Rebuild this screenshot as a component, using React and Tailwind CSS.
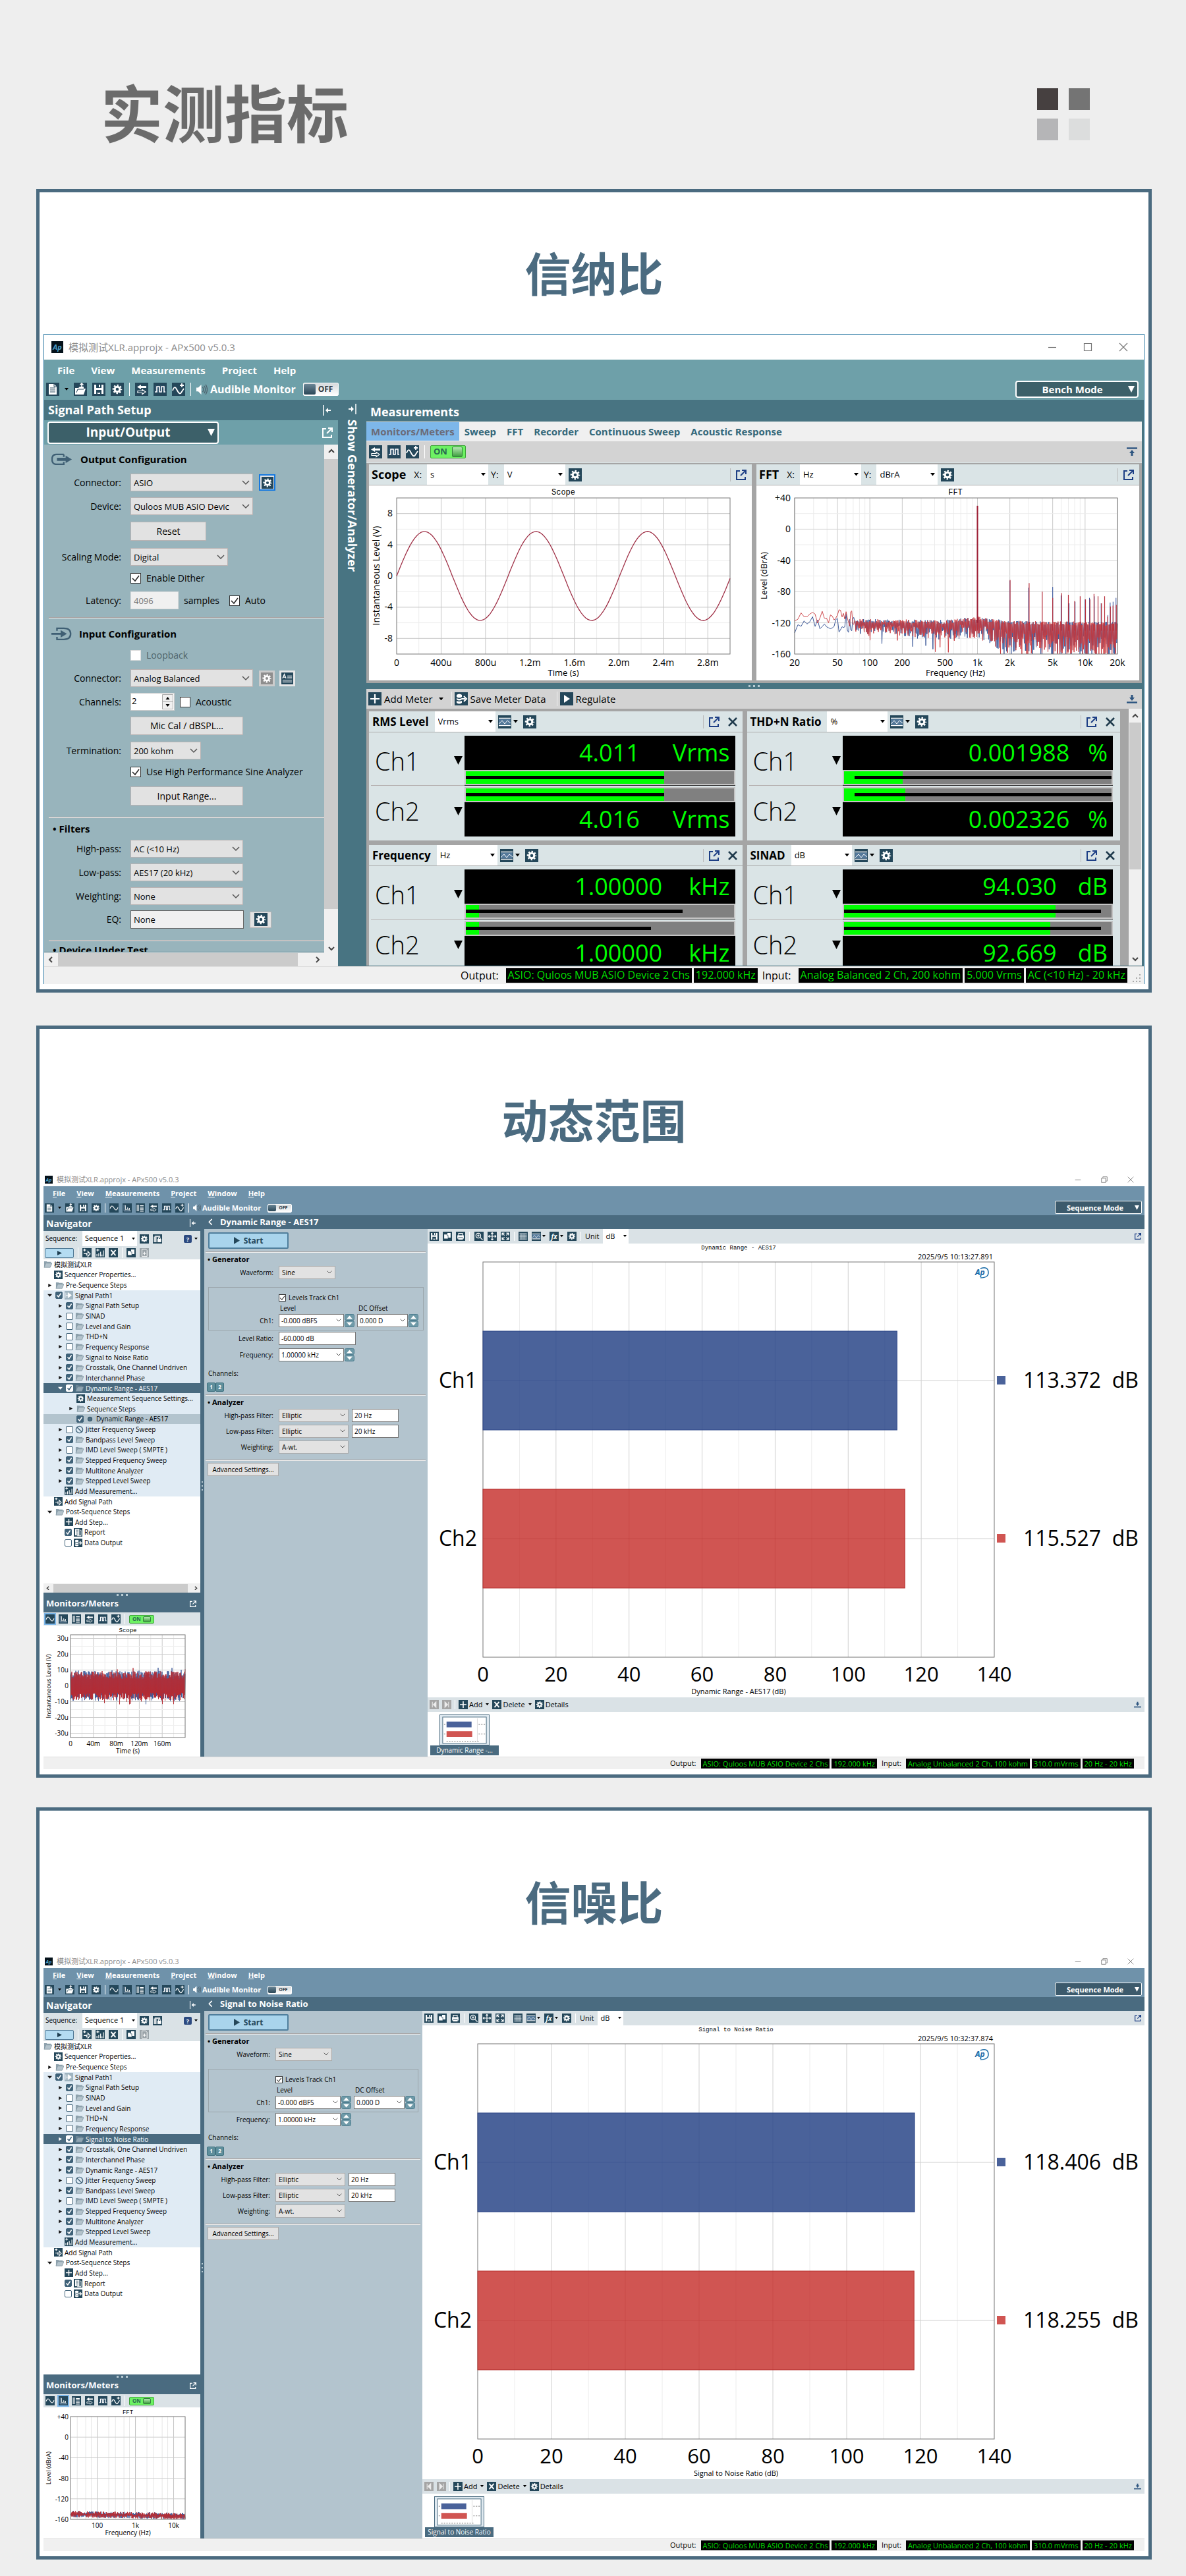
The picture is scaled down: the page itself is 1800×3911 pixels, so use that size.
const NAV_TOP = [
  { text: '模拟测试XLR', icon: 'folder', pad: 'pl-0', kind: 'root' },
  { text: 'Sequencer Properties...', icon: 'gear', pad: 'pl-4' },
  { text: 'Pre-Sequence Steps', icon: 'folder', pad: 'pl-1', arrow: 'right' },
];

const NAV_BOTTOM = [
  { text: 'Add Signal Path', icon: 'addPath', pad: 'pl-4' },
  { text: 'Post-Sequence Steps', icon: 'folder', pad: 'pl-1', arrow: 'down' },
  { text: 'Add Step...', icon: 'plus', pad: 'pl-8' },
  { text: 'Report', icon: 'report', pad: 'pl-8', check: true },
  { text: 'Data Output', icon: 'data', pad: 'pl-8', check: false },
];

const m = (text, check, extra = {}) => ({ text, check, icon: 'folder', pad: 'pl-5', arrow: 'right', tint: true, ...extra });

const navItems = (selected) => [
  ...NAV_TOP,
  m('Signal Path1', true, { icon: 'path', pad: 'pl-1', arrow: 'down' }),
  m('Signal Path Setup', true),
  m('SINAD', false),
  m('Level and Gain', false),
  m('THD+N', false),
  m('Frequency Response', false),
  m('Signal to Noise Ratio', true, { selected: selected === 'snr' }),
  m('Crosstalk, One Channel Undriven', true),
  m('Interchannel Phase', true),
  m('Dynamic Range - AES17', true, { selected: selected === 'dr', arrow: selected === 'dr' ? 'down' : 'right' }),
  ...(selected === 'dr'
    ? [
        { text: 'Measurement Sequence Settings...', icon: 'gear', pad: 'pl-[50px]', tint: true },
        { text: 'Sequence Steps', icon: 'folder', pad: 'pl-9', arrow: 'right', tint: true },
        { text: 'Dynamic Range - AES17', icon: 'dot', pad: 'pl-[50px]', check: true, leaf: true },
      ]
    : []),
  m('Jitter Frequency Sweep', false, { icon: 'ban' }),
  m('Bandpass Level Sweep', true),
  m('IMD Level Sweep ( SMPTE )', false),
  m('Stepped Frequency Sweep', true),
  m('Multitone Analyzer', true),
  m('Stepped Level Sweep', true),
  { text: 'Add Measurement...', icon: 'addBars', pad: 'pl-8', tint: true },
  ...NAV_BOTTOM,
];

// glyphs are drawn white on a 20x20 dark tile
const GLYPHS = {
  doc: <><path d="M4 2h8l4 4v12H4z" fill="#fff" /><path d="M12 2v4h4M6 8h8M6 11h8M6 14h8" stroke="#24475a" fill="none" /></>,
  open: <><path d="M2 8h5l2-2h6v3h3l-3 9H2z" fill="#fff" /><path d="M12 1v6M9.500 3.500 12 1l2.500 2.500" stroke="#fff" strokeWidth="1.600" fill="none" /><path d="M4 15l2-5h9" stroke="#24475a" fill="none" /></>,
  save: <path fillRule="evenodd" fill="#fff" d="M3 3h14v14H3zM6 3v5h8V3h-2v4H10V3zM6 11v6h2v-2h1.500v1h1v-1H12v2h2v-6z" />,
  gear: <g fill="none" stroke="#fff"><circle cx="10" cy="10" r="3.800" strokeWidth="3" /><circle cx="10" cy="10" r="6" strokeWidth="2.600" strokeDasharray="2.356 2.356" strokeDashoffset="1.178" /></g>,
  route: <><path d="M9 3v2h8v3H9v2L3 6.500z" fill="#fff" /><path d="M11 10.500v2H4v3h7v2l5-3.500z" fill="none" stroke="#fff" strokeWidth="1.200" /></>,
  pulse: <><path d="M3 4v12M7 4v12M11 4v12M15 4v12M2 8h16M2 12h16" stroke="#45668a" strokeWidth=".6" /><path d="M2 14h3V6h4v8h3V6h4v8h2" fill="none" stroke="#fff" strokeWidth="1.600" /></>,
  wavePlus: <path d="M1 12c2-6 4-6 6-2s5 9 7 5l4-6M15 1v6M12 4h6" fill="none" stroke="#fff" strokeWidth="1.800" />,
  sine: <path d="M1.500 11C4 4 7 4 10 10s6 6 8.500-1" fill="none" stroke="#fff" strokeWidth="1.500" />,
  spectrum: <><path d="M3 3v14h15" stroke="#8fa8c8" fill="none" /><path d="M5 15l1-1V4l1 11 2-2 1 2 1-6 1 6 2-1 1-4v5h2" stroke="#fff" fill="none" /></>,
  list: <path d="M3 3v14M6 3v14M9 5h8M9 8h8M9 11h8M9 14h8M9 17h8" stroke="#fff" strokeWidth="1.500" />,
  plus: <path d="M10 3v14M3 10h14" stroke="#fff" strokeWidth="2.200" />,
  cross: <path d="M5 4l10 12M15 4L5 16" stroke="#fff" strokeWidth="2.600" />,
  play: <path d="M6 4l9 6-9 6z" fill="#fff" />,
  first: <path d="M6 4v12M14 4v12L8 10z" stroke="#eee" fill="#eee" strokeWidth="1.500" />,
  last: <path d="M14 4v12M6 4v12l6-6z" stroke="#eee" fill="#eee" strokeWidth="1.500" />,
  data: <><path d="M3 4q4-3 8 0v3q-4 3-8 0zM3 9q4 2 8 0v2q-4 3-8 0zM3 13q4 2 8 0v3q-4 3-8 0z" fill="#fff" /><path d="M11 10h5M14 6l4 4-4 4" stroke="#fff" strokeWidth="2" fill="none" /></>,
  trace: <><path d="M1 4.500h18M1 15.500h18" stroke="#fff" strokeWidth="1.500" /><rect x="1" y="5.500" width="18" height="9" fill="#54799a" /><path d="M1 13l5-5 4 5 4-5 5 4" stroke="#fff" fill="none" /></>,
  copy: <path d="M3 6h6v3h2v6H3zM10 3h7v10h-5V8h-2z" fill="#fff" />,
  addDoc: <><path d="M5 2h8l3 3v13H5z" fill="none" stroke="#fff" strokeWidth="1.400" /><path d="M10.500 8v7M7 11.500h7" stroke="#fff" strokeWidth="1.600" /></>,
  lock: <><path d="M2 5h6v12H2zM4 3h12v3H4z" fill="#fff" opacity=".8" /><path d="M10 10h8v7h-8z" fill="#fff" /><path d="M12 10V8q2-3 4 0v2" stroke="#fff" strokeWidth="1.500" fill="none" /></>,
  print: <path fillRule="evenodd" fill="#fff" d="M5 3h10v5h2v7h-2v2H5v-2H3V8h2zM6.500 4.500V8h7V4.500zM5 12v1.500h10V12z" />,
  zoom: <g fill="none" stroke="#fff" strokeWidth="1.700"><circle cx="8.500" cy="8.500" r="5.200" /><path d="M12.500 12.500 18 18M6 8.500h5M8.500 6v5" /></g>,
  move: <path d="M10 2v16M2 10h16M7.500 4.500 10 2l2.500 2.500M7.500 15.500 10 18l2.500-2.500M4.500 7.500 2 10l2.500 2.500M15.500 7.500 18 10l-2.500 2.500" stroke="#fff" strokeWidth="1.700" fill="none" />,
  expand: <path d="M3 8V3h5M12 3h5v5M17 12v5h-5M8 17H3v-5M3 3l5 5M17 3l-5 5M17 17l-5-5M3 17l5-5" stroke="#fff" strokeWidth="1.900" fill="none" />,
  table: <path d="M2 4h16M2 7.500h16M2 11h16M2 14h16M2 17h16M4 4v13M7 4v13M10 4v13M13 4v13M16 4v13" stroke="#dfe8ee" strokeWidth="1" />,
  func: <text x="10" y="15" textAnchor="middle" fill="#fff" fontSize="14" fontStyle="italic" fontWeight="700">fx</text>,
  report: <><path d="M3 2h10v15H3z" fill="#fff" /><path d="M5 5h6M5 8h6M5 11h6M5 14h6" stroke="#24475a" /><path d="M15 5h2v13H8" stroke="#fff" strokeWidth="1.500" fill="none" /></>,
  addPath: <path d="M5 1v6M2 4h6M3 12h5M12 7v11l5-5.500zM9 10v6" stroke="#fff" strokeWidth="1.700" fill="none" />,
  addBars: <path d="M5 1v6M2 4h6M3 18v-5M7 18v-7M11 18V8M14 18v-4M17 18V5" stroke="#fff" strokeWidth="1.700" fill="none" />,
  card: <><path d="M10 6h8M10 9h8M2 13h16M2 16h16" stroke="#fff" strokeWidth="1.200" /><path d="M2 10l3-7 3 7M3 8h4" stroke="#fff" fill="none" strokeWidth="1.400" /></>,
  path: <path d="M3 4v12M3 10h5M8 4v12l8-6z" fill="#fff" stroke="#fff" strokeWidth="1.300" />,
};

function Tile({ name, size = 'size-5', color = '#24475a' }) {
  return (
    <svg viewBox="0 0 20 20" className={`${size} shrink-0`} aria-hidden="true">
      <rect width="20" height="20" fill={color} />
      {GLYPHS[name]}
    </svg>
  );
}

function ToolButton({ name, size, color, label }) {
  return (
    <button type="button" aria-label={label || name} className="flex shrink-0">
      <Tile name={name} size={size} color={color} />
    </button>
  );
}

function Down({ tall, className = 'w-2 text-black' }) {
  return (
    <svg viewBox={tall ? '0 0 8 8' : '0 0 8 5'} className={`${className} shrink-0`} aria-hidden="true">
      <path d={tall ? 'M0 0h8L4 8z' : 'M0 0h8L4 5z'} fill="currentColor" />
    </svg>
  );
}

function Chevron({ className = 'w-3' }) {
  return (
    <svg viewBox="0 0 12 8" className={`${className} pointer-events-none shrink-0`} aria-hidden="true">
      <path d="M1 1l5 5 5-5" fill="none" stroke="#555" strokeWidth="1.500" />
    </svg>
  );
}

function PopOut({ className = 'size-4 text-[#1d3f85]' }) {
  return (
    <svg viewBox="0 0 16 16" className={`${className} shrink-0`} fill="none" stroke="currentColor" strokeWidth="2" aria-hidden="true">
      <path d="M6 2H1v13h13v-4M9 1h6v6M15 1L7 9" />
    </svg>
  );
}

function Collapse({ flip, className = 'h-4' }) {
  return (
    <svg viewBox="0 0 14 16" className={`${className} shrink-0 ${flip ? 'rotate-180' : ''}`} aria-hidden="true">
      <path d="M2 0v16" stroke="#fff" strokeWidth="1.500" />
      <path d="M5 8l4-4v3h4v2H9v3z" fill="#fff" />
    </svg>
  );
}

function Dock({ up, className = 'w-4' }) {
  return (
    <svg viewBox="0 0 16 14" className={`${className} shrink-0`} aria-hidden="true">
      <path d={up ? 'M0 1.500h16' : 'M0 12.500h16'} stroke="#2d5580" strokeWidth="2.400" />
      <path d={up ? 'M8 4l4 5H9.500v4h-3V9H4z' : 'M8 10l4-5H9.500V1h-3v4H4z'} fill="#2d5580" />
    </svg>
  );
}

function Speaker({ className }) {
  return (
    <svg viewBox="0 0 18 20" className={`${className} shrink-0`} aria-hidden="true">
      <path d="M0 7h3l5-5v16l-5-5H0z" fill="#fff" />
      <path d="M10 6q3 4 0 8M12.500 4q4 6 0 12M15 2q5 8 0 16" fill="none" stroke="#4d5f6a" strokeWidth="1.300" />
    </svg>
  );
}

function AppIcon({ className }) {
  return (
    <svg viewBox="0 0 18 18" className={`${className} shrink-0`} aria-hidden="true">
      <rect width="18" height="18" fill="#05121b" />
      <text x="9" y="13" textAnchor="middle" fontSize="11" fontStyle="italic" fontWeight="700" fill="#4ea0c8">Ap</text>
    </svg>
  );
}

function CaptionButtons({ small }) {
  const size = small ? 'size-[10px]' : 'size-[14px]';
  const shapes = [
    ['Minimize', <path key="a" d="M1 7.500h12" />],
    ['Maximize', small ? <path key="b" d="M1 4h9v9H1zM4 4V1h9v9h-3" /> : <path key="b" d="M1.500 1.500h11v11h-11z" />],
    ['Close', <path key="c" d="M1 1l12 12M13 1L1 13" />],
  ];
  return (
    <div className={small ? 'flex gap-[30px] pr-4' : 'flex gap-10 pr-6'}>
      {shapes.map(([label, shape]) => (
        <button key={label} type="button" aria-label={label}>
          <svg viewBox="0 0 14 14" className={size} fill="none" stroke="#777" strokeWidth="1.200">{shape}</svg>
        </button>
      ))}
    </div>
  );
}

function Toggle({ on, small }) {
  if (on) {
    return (
      <button type="button" role="switch" aria-checked="true" className={`flex items-center justify-between rounded-xs border border-[#3fa33a] bg-[#6df263] font-bold text-[#28694f] ${small ? 'h-[13px] w-[38px] px-1 text-[8px]' : 'h-5 w-[54px] px-1 text-[13px]'}`}>
        ON
        <span className={`rounded-xs border border-[#33803a] bg-linear-to-b from-[#b4e8b2] to-[#3b9f3d] ${small ? 'h-[9px] w-3' : 'h-4 w-4'}`}></span>
      </button>
    );
  }
  return (
    <button type="button" role="switch" aria-checked="false" className={`flex items-center rounded-xs border border-white bg-linear-to-b from-[#d5d9db] to-white font-bold text-[#333c44] ${small ? 'h-[13px] w-[37px] gap-1 text-[7px]' : 'h-5 w-[54px] gap-1 text-[12px]'}`}>
      <span className={`rounded-xs bg-linear-to-b from-[#6c8797] to-[#2b4858] ${small ? 'h-[10px] w-3' : 'h-4 w-[18px]'}`}></span>
      OFF
    </button>
  );
}

function Pick({ id, value, className, label, arrow = 'chevron', text = 'text-[13px]' }) {
  return (
    <span className={`flex items-center ${className}`}>
      <select id={id} aria-label={label} defaultValue={value} className={`min-w-0 flex-1 appearance-none truncate bg-transparent outline-none ${text}`}>
        <option>{value}</option>
      </select>
      {arrow === 'chevron' ? <Chevron className={text === 'text-[13px]' ? 'w-3' : 'w-2'} /> : <Down className={text === 'text-[13px]' ? 'w-[7px]' : 'w-[5px]'} />}
    </span>
  );
}

function Check({ id, checked, label, small, disabled }) {
  return (
    <span className={`relative flex shrink-0 ${small ? 'size-[11px]' : 'size-4'}`}>
      <input id={id} type="checkbox" aria-label={label} defaultChecked={checked} className={`size-full appearance-none border bg-white ${disabled ? 'border-[#ddd]' : 'border-[#333]'}`} />
      {checked && (
        <svg viewBox="0 0 16 16" className="pointer-events-none absolute inset-0 size-full" aria-hidden="true">
          <path d="M3 8l4 4 6-8" fill="none" stroke="#222" strokeWidth="1.500" />
        </svg>
      )}
    </span>
  );
}

function Field({ label, id, className, children }) {
  return (
    <div className={`flex items-center ${className}`}>
      <label htmlFor={id} className="w-[117px] shrink-0 text-right">{label}</label>
      <div className="ml-[14px] flex items-center">{children}</div>
    </div>
  );
}

const SELECT = 'h-[27px] border border-[#b9b3b3] bg-[#e2e2e2] pl-1 pr-1';
const BUTTON = 'border border-[#b9b3b3] bg-[#e2e2e2]';

function Rule({ className }) {
  return <div className={`h-[2px] border-t border-[#a9a4a4] bg-[#eeeeee] ${className}`}></div>;
}

function ScrollArrow({ turn }) {
  return (
    <svg viewBox="0 0 12 12" className={`size-3 shrink-0 ${turn}`} aria-hidden="true">
      <path d="M2 8l4-4 4 4" fill="none" stroke="#444" strokeWidth="2" />
    </svg>
  );
}

function SignalPathSetup() {
  return (
    <aside className="w-[446px] shrink-0">
      <div className="flex h-[31px] items-center justify-between bg-[#487482] pr-[10px] pl-[6px] text-[18px] font-bold text-white">
        <h3>Signal Path Setup</h3>
        <Collapse />
      </div>
      <div className="flex h-[37px] items-center justify-between bg-[#6ea0a9] pr-2 pl-[5px]">
        <button type="button" className="flex h-[34px] w-[260px] items-center rounded-sm border-2 border-white bg-[#3c6069] pr-1 text-[19px] font-bold text-white">
          <span className="flex-1">Input/Output</span>
          <Down tall className="w-[11px] text-white" />
        </button>
        <PopOut className="size-4 text-white" />
      </div>
      <div className="flex">
        <div className="h-[770px] flex-1 overflow-hidden bg-[#98b4bc] text-[14px] leading-[18px]">
          <div className="mt-2 ml-[11px] flex h-7 items-center gap-3 text-[15px] font-bold">
            <svg viewBox="0 0 34 20" className="w-8" aria-hidden="true"><path d="M20 2H8q-7 0-7 8t7 8h12v-4M20 2v4" fill="none" stroke="#3f5f74" strokeWidth="2.500" /><path d="M9 7.500h14V4l10 6-10 6v-3.500H9z" fill="#3f5f74" /></svg>
            <h4>Output Configuration</h4>
          </div>
          <Field label="Connector:" id="out-connector" className="mt-2">
            <Pick id="out-connector" value="ASIO" className={`${SELECT} w-[186px]`} />
            <button type="button" aria-label="Connector settings" className="ml-[9px] grid h-[25px] w-[25px] place-items-center border-2 border-[#1478e0] bg-[#e2e2e2]"><Tile name="gear" size="size-[18px]" /></button>
          </Field>
          <Field label="Device:" id="out-device" className="mt-[9px]">
            <Pick id="out-device" value="Quloos MUB ASIO Devic" className={`${SELECT} w-[186px]`} />
          </Field>
          <button type="button" className={`${BUTTON} mt-[10px] ml-[131px] block h-[29px] w-[115px]`}>Reset</button>
          <Field label="Scaling Mode:" id="scaling" className="mt-[11px]">
            <Pick id="scaling" value="Digital" className={`${SELECT} w-[148px]`} />
          </Field>
          <div className="mt-[10px] ml-[131px] flex items-center gap-2">
            <Check id="dither" checked /><label htmlFor="dither">Enable Dither</label>
          </div>
          <Field label="Latency:" id="latency" className="mt-[11px]">
            <input id="latency" defaultValue="4096" className="h-[27px] w-[73px] border border-[#ddd] bg-[#f0f0f0] pl-1 text-[13px] text-[#777]" />
            <span className="ml-2 w-[69px]">samples</span>
            <Check id="auto" checked /><label htmlFor="auto" className="ml-2">Auto</label>
          </Field>
          <Rule className="mt-3 ml-[7px]" />
          <div className="mt-[9px] ml-[11px] flex h-7 items-center gap-[10px] text-[15px] font-bold">
            <svg viewBox="0 0 34 22" className="w-8" aria-hidden="true"><path d="M9 6V2h11q11 0 11 9t-11 9H9v-4" fill="none" stroke="#3f5f74" strokeWidth="2.500" /><path d="M0 9.500h15V5l10 6-10 6v-4.500H0z" fill="#3f5f74" /></svg>
            <h4>Input Configuration</h4>
          </div>
          <div className="mt-[10px] ml-[131px] flex items-center gap-2 text-[#4e6369]">
            <Check id="loopback" disabled /><label htmlFor="loopback">Loopback</label>
          </div>
          <Field label="Connector:" id="in-connector" className="mt-3">
            <Pick id="in-connector" value="Analog Balanced" className={`${SELECT} w-[186px]`} />
            <button type="button" aria-label="Input settings" className="ml-[9px] grid size-6 place-items-center bg-[#ccc]"><Tile name="gear" size="size-[18px]" color="#8e8e8e" /></button>
            <button type="button" aria-label="Input sheet" className="ml-[7px] grid size-6 place-items-center bg-[#e8e8e8]"><Tile name="card" size="size-[18px]" /></button>
          </Field>
          <Field label="Channels:" id="channels" className="mt-[9px]">
            <span className="flex h-[27px] w-[67px] items-center border border-[#ccc] bg-white pr-px">
              <input id="channels" defaultValue="2" className="min-w-0 flex-1 pb-1 pl-px text-[13px]" />
              <svg viewBox="0 0 17 23" className="w-[17px]" aria-hidden="true"><path d="M.5.500h16v11H.5zM.5 11.500h16v11H.5z" fill="#f0f0f0" stroke="#aaa" /><path d="M5.500 8l3-4 3 4zM5.500 15h6l-3 4z" /></svg>
            </span>
            <span className="w-2"></span>
            <Check id="acoustic" /><label htmlFor="acoustic" className="ml-2">Acoustic</label>
          </Field>
          <button type="button" className={`${BUTTON} mt-[9px] ml-[131px] block h-7 w-[171px]`}>Mic Cal / dBSPL...</button>
          <Field label="Termination:" id="termination" className="mt-[10px]">
            <Pick id="termination" value="200 kohm" className={`${SELECT} w-[107px]`} />
          </Field>
          <div className="mt-[10px] ml-[131px] flex items-center gap-2">
            <Check id="sine" checked /><label htmlFor="sine">Use High Performance Sine Analyzer</label>
          </div>
          <button type="button" className={`${BUTTON} mt-[13px] ml-[131px] block h-[29px] w-[171px]`}>Input Range...</button>
          <Rule className="mt-[17px] ml-[7px]" />
          <h4 className="mt-[7px] ml-[13px] text-[15px] font-bold">• Filters</h4>
          <Field label="High-pass:" id="highpass" className="mt-2">
            <Pick id="highpass" value="AC (<10 Hz)" className={`${SELECT} w-[171px]`} />
          </Field>
          <Field label="Low-pass:" id="lowpass" className="mt-[9px]">
            <Pick id="lowpass" value="AES17 (20 kHz)" className={`${SELECT} w-[171px]`} />
          </Field>
          <Field label="Weighting:" id="weighting" className="mt-[9px]">
            <Pick id="weighting" value="None" className={`${SELECT} w-[171px]`} />
          </Field>
          <Field label="EQ:" id="eq" className="mt-2">
            <input id="eq" defaultValue="None" className="h-7 w-[172px] border border-[#666] bg-[#f0f0f0] pl-1 text-[13px]" />
            <button type="button" aria-label="EQ settings" className={`${BUTTON} ml-[9px] grid h-[25px] w-[33px] place-items-center`}><Tile name="gear" /></button>
          </Field>
          <Rule className="mt-[17px] ml-[7px]" />
          <h4 className="mt-1 ml-[13px] text-[15px] font-bold">• Device Under Test</h4>
        </div>
        <div className="flex w-[21px] flex-col items-center bg-[#f0f0f0] pt-1">
          <ScrollArrow turn="rotate-0" />
          <div className="mt-[6px] h-[683px] w-full bg-[#cbcbcb]"></div>
          <div className="mt-[54px]"><ScrollArrow turn="rotate-180" /></div>
        </div>
      </div>
      <div className="flex h-[21px] items-center bg-[#f0f0f0] pr-6 pl-1">
        <ScrollArrow turn="-rotate-90" />
        <div className="ml-[5px] h-5 w-[364px] bg-[#cbcbcb]"></div>
        <div className="ml-6"><ScrollArrow turn="rotate-90" /></div>
      </div>
    </aside>
  );
}

// small deterministic generator so the noise traces look the same on every render
function makeRandom(seed) {
  let s = seed;
  return () => {
    s = (s * 16807) % 2147483647;
    return s / 2147483647;
  };
}

const FFT = { left: 58, right: 548, top: 19, bottom: 256 };
const fx = (hz) => FFT.left + (Math.log10(hz / 20) / 3) * (FFT.right - FFT.left);
const fy = (db) => Math.min(FFT.bottom, FFT.top + ((40 - db) / 200) * (FFT.bottom - FFT.top));

function fftTrace(seed, lift) {
  const rnd = makeRandom(seed);
  const pts = [];
  for (let x = FFT.left; x < 150; x += 5 - (x - FFT.left) * 0.04) {
    pts.push([x, fy(-118 + lift + (rnd() - 0.5) * (10 + (x - 58) * 0.15) - (rnd() < 0.2 ? 9 : 0))]);
  }
  for (let x = 150; x < FFT.right; x += 0.9) {
    const t = (x - 150) / 398;
    const hump = Math.max(0, 1 - Math.abs(x - 335) / 50) * 5;
    const top = -115 + hump - t * 4 - rnd() * 5;
    const depth = 14 + t * 28 + (x > 360 ? 10 : 0);
    const deep = rnd() < 0.06 ? 14 : 0;
    pts.push([x, fy(pts.length % 2 ? top : top - depth * (0.3 + rnd() * 0.7) - deep)]);
  }
  return pts.map(([x, y], i) => `${i ? 'L' : 'M'}${x.toFixed(1)} ${y.toFixed(1)}`).join('');
}

const SPIKES_RED = [[1000, 30], [2010, -65], [3020, -69], [4000, -80], [5000, -88], [6050, -82], [7000, -84], [8000, -92], [9000, -86], [10100, -90], [11100, -90], [12100, -83], [13200, -86], [14200, -95], [15200, -86], [16200, -112], [17200, -99], [18200, -98], [19500, -97]];
const SPIKES_BLUE = [[2000, -66], [2980, -75], [5000, -74], [5980, -85], [7100, -95], [8080, -93], [10000, -90], [11000, -88], [12200, -86], [14100, -95], [16300, -110], [17100, -94], [18200, -93], [19400, -88]];

function spikes(list) {
  return list.map(([hz, db]) => `M${fx(hz).toFixed(1)} ${fy(-130)}V${fy(db).toFixed(1)}`).join('');
}

function ScopeChart() {
  const L = 42;
  const R = 548;
  const px = (us) => L + (us / 3000) * (R - L);
  const wave = Array.from({ length: 151 }, (_, i) => {
    const us = i * 20;
    return `${i ? 'L' : 'M'}${px(us).toFixed(1)} ${(137.5 - Math.sin((us / 1000) * 2 * Math.PI * 0.997) * 67.500).toFixed(1)}`;
  }).join('');
  return (
    <svg viewBox="0 0 581 296" className="block w-full bg-white" role="img" aria-label="Scope">
      <text x="295" y="14" textAnchor="middle" className="font-['Liberation_Mono',monospace] text-[12px]">Scope</text>
      {Array.from({ length: 14 }, (_, i) => (
        <path key={i} d={`M${px((i + 1) * 200)} 19V256`} stroke={i % 2 ? '#c4c4c4' : '#ececec'} />
      ))}
      {[8, 6, 4, 2, 0, -2, -4, -6, -8].map((v) => (
        <path key={v} d={`M${L} ${137.5 - v * 11.850}H${R}`} stroke={v % 4 ? '#ececec' : '#c4c4c4'} />
      ))}
      <rect x={L} y="19" width={R - L} height="237" fill="none" stroke="#777" />
      <path d={wave} fill="none" stroke="#a03248" strokeWidth="1.300" />
      {[8, 4, 0, -4, -8].map((v) => <text key={v} x="36" y={142 - v * 11.850} textAnchor="end" fontSize="14">{v}</text>)}
      {['0', '400u', '800u', '1.2m', '1.6m', '2.0m', '2.4m', '2.8m'].map((t, i) => (
        <text key={t} x={px(i * 400)} y="274" textAnchor="middle" fontSize="14">{t}</text>
      ))}
      <text x="295" y="289" textAnchor="middle" fontSize="13">Time (s)</text>
      <text transform="translate(16 137) rotate(-90)" textAnchor="middle" fontSize="14">Instantaneous Level (V)</text>
    </svg>
  );
}

function FftChart() {
  const minor = [30, 40, 60, 70, 80, 90, 300, 400, 600, 700, 800, 900, 3000, 4000, 6000, 7000, 8000, 9000];
  const major = [[20, '20'], [50, '50'], [100, '100'], [200, '200'], [500, '500'], [1000, '1k'], [2000, '2k'], [5000, '5k'], [10000, '10k'], [20000, '20k']];
  return (
    <svg viewBox="0 0 581 296" className="block w-full bg-white" role="img" aria-label="FFT">
      <text x="302" y="14" textAnchor="middle" className="font-['Liberation_Mono',monospace] text-[12px]">FFT</text>
      {minor.map((hz) => <path key={hz} d={`M${fx(hz)} 19V256`} stroke="#ececec" />)}
      {major.map(([hz]) => <path key={hz} d={`M${fx(hz)} 19V256`} stroke="#c9c9c9" />)}
      {[20, 0, -20, -40, -60, -80, -100, -120, -140].map((v) => (
        <path key={v} d={`M58 ${fy(v)}H548`} stroke={v % 40 ? '#ececec' : '#d4d4d4'} />
      ))}
      <g fill="none">
        <path d={fftTrace(77, -1)} stroke="#3d5a9a" />
        <path d={spikes(SPIKES_BLUE)} stroke="#2f4f9c" />
        <path d={fftTrace(4242, 5)} stroke="#c8383c" strokeWidth=".9" />
        <path d={spikes(SPIKES_RED)} stroke="#b8303c" strokeWidth="1.200" />
        <path d={`M${fx(1000)} ${fy(-120)}V${fy(30)}`} stroke="#9c1f35" strokeWidth="2" />
        <rect x="58" y="19" width="490" height="237" stroke="#777" />
      </g>
      {['+40', '0', '-40', '-80', '-120', '-160'].map((t, i) => (
        <text key={t} x="52" y={24 + i * 47.400} textAnchor="end" fontSize="14">{t}</text>
      ))}
      {major.map(([hz, t]) => <text key={t} x={fx(hz)} y="274" textAnchor="middle" fontSize="14">{t}</text>)}
      <text x="302" y="289" textAnchor="middle" fontSize="13">Frequency (Hz)</text>
      <text transform="translate(16 137) rotate(-90)" textAnchor="middle" fontSize="13">Level (dBrA)</text>
    </svg>
  );
}

function GraphPanel({ title, x, y, children }) {
  return (
    <section className="min-w-0 flex-1">
      <div className="flex h-8 items-center border-b border-[#aaa] bg-[#dae4e6] text-[14px]">
        <h4 className="mr-3 ml-1 text-[18px] font-bold">{title}</h4>
        X:
        <Pick label={`${title} X unit`} value={x} arrow="down" className="mr-1 ml-2 h-full w-[93px] bg-white pr-1 pl-[5px]" />
        Y:
        <Pick label={`${title} Y unit`} value={y} arrow="down" className="mr-[5px] ml-2 h-full w-[93px] bg-white pr-1 pl-[5px]" />
        <ToolButton name="gear" label={`${title} settings`} />
        <span className="mr-2 ml-auto h-5 w-px bg-[#bbb]"></span>
        <button type="button" aria-label={`Undock ${title}`} className="mr-2"><PopOut /></button>
      </div>
      {children}
    </section>
  );
}

function Bar({ fill, from, to }) {
  return (
    <div className="relative h-[23px] border-2 border-[#c4c4c4] bg-[#808080]">
      <div className="h-full bg-[#00ff00]" style={{ width: `${fill}%` }}></div>
      <div className="absolute inset-y-[7px] bg-black" style={{ left: `${from}%`, right: `${100 - to}%` }}></div>
    </div>
  );
}

function Meter({ title, unit, suffix, gap, rows, className }) {
  return (
    <section className={`min-w-0 flex-1 overflow-hidden bg-[#dae4e6] ${className}`}>
      <div className="flex h-8 items-center border-b border-[#aaa]">
        <h4 className="mr-[9px] ml-[5px] text-[17px] font-bold">{title}</h4>
        <Pick label={`${title} unit`} value={unit} arrow="down" className="mr-1 h-full w-[92px] bg-white pr-1 pl-[5px]" />
        <ToolButton name="trace" label={`${title} trace`} />
        <Down className="mr-2 ml-[3px] w-[7px]" />
        <ToolButton name="gear" label={`${title} settings`} />
        <span className="mr-2 ml-auto h-5 w-px bg-[#bbb]"></span>
        <button type="button" aria-label={`Undock ${title}`}><PopOut /></button>
        <button type="button" aria-label={`Close ${title}`} className="mr-2 ml-[13px]">
          <svg viewBox="0 0 14 14" className="size-[14px]"><path d="M1 1l12 12M13 1L1 13" stroke="#1f3a4c" strokeWidth="2.500" /></svg>
        </button>
      </div>
      <div className="flex pt-[5px] pr-[11px]">
        <div className="w-[145px] shrink-0 pl-[3px]">
          {['Ch1', 'Ch2'].map((ch, i) => (
            <div key={ch} className={`flex h-[76px] items-center pl-[6px] text-[38px] leading-none font-light ${i ? '' : 'border-b border-[#b5b0b0]'}`}>
              <span className="flex-1">{ch}</span>
              <Down tall className="mr-[3px] w-[13px]" />
            </div>
          ))}
        </div>
        <div className="flex-1 bg-black text-[36px] leading-none text-[#00ff00]">
          <Readout value={rows[0].value} suffix={suffix} gap={gap} />
          <Bar {...rows[0]} />
          <div className="h-[3px] border-t border-[#333] bg-[#dae4e6]"></div>
          <Bar {...rows[1]} />
          <Readout value={rows[1].value} suffix={suffix} gap={gap} />
        </div>
      </div>
    </section>
  );
}

function Readout({ value, suffix, gap }) {
  return (
    <div className="flex h-[52px] items-center justify-end pr-2">
      <span className={gap}>{value}</span>
      <span>{suffix}</span>
    </div>
  );
}

function Dots({ className = '' }) {
  return (
    <div className={`flex items-center justify-center gap-1 ${className}`}>
      {[0, 1, 2].map((i) => <span key={i} className="size-[3px] bg-[#b9cbd3]"></span>)}
    </div>
  );
}

function StatusBar({ small, output, input }) {
  const box = small ? 'bg-black px-[3px] h-[15px] leading-[15px] text-[#00dd00]' : 'bg-black px-[3px] h-[22px] leading-[21px] text-[#00dd00]';
  return (
    <footer className={`flex items-center justify-end border-t border-[#ddd] bg-[#f0f0f0] whitespace-nowrap ${small ? 'h-[19px] gap-[3px] pr-4 text-[11px]' : 'h-[27px] gap-[3px] pr-1 text-[16px]'}`}>
      <span className={small ? 'mr-1' : 'mr-2'}>Output:</span>
      {output.map((t) => <span key={t} className={box}>{t}</span>)}
      <span className={small ? 'mx-1' : 'mr-2 ml-1'}>Input:</span>
      {input.map((t) => <span key={t} className={box}>{t}</span>)}
      {!small && (
        <svg viewBox="0 0 14 14" className="mt-2 ml-1 size-[14px]" fill="#aaa" aria-hidden="true">
          <path d="M11 1h2v2h-2zM11 6h2v2h-2zM6 6h2v2H6zM11 11h2v2h-2zM6 11h2v2H6zM1 11h2v2H1z" />
        </svg>
      )}
    </footer>
  );
}

function BenchWindow() {
  return (
    <div className="mx-[6px] border-x border-t border-[#2f7ba5]">
      <div className="flex h-[38px] items-center justify-between pl-[11px]">
        <div className="flex items-center gap-2 text-[15px] text-[#8c8c8c]">
          <AppIcon className="size-[18px]" />
          模拟测试XLR.approjx - APx500 v5.0.3
        </div>
        <CaptionButtons />
      </div>
      <div className="flex h-[61px] items-end justify-between bg-[#6ea0a9] pr-2 text-white">
        <div className="self-start">
          <nav className="flex h-8 items-center gap-[25px] pl-5 text-[15px] font-bold">
            {['File', 'View', 'Measurements', 'Project', 'Help'].map((t) => <button key={t} type="button">{t}</button>)}
          </nav>
          <div className="flex h-[26px] items-center gap-2 pl-[3px] text-[16px] font-bold">
            <ToolButton name="doc" />
            <Down className="w-[6px] text-black" />
            <ToolButton name="open" />
            <ToolButton name="save" />
            <ToolButton name="gear" />
            <span className="h-5 w-px bg-white"></span>
            <ToolButton name="route" />
            <ToolButton name="pulse" />
            <ToolButton name="wavePlus" />
            <span className="h-5 w-px bg-white"></span>
            <div className="mr-[3px] flex items-center gap-1"><Speaker className="w-[17px]" />Audible Monitor</div>
            <Toggle />
          </div>
        </div>
        <button type="button" className="mb-[3px] flex h-[26px] w-[187px] items-center rounded-sm border-2 border-white bg-[#3c6069] pr-1 text-[15px] leading-none font-bold">
          <span className="flex-1">Bench Mode</span>
          <Down tall className="w-[10px] text-white" />
        </button>
      </div>
      <div className="flex bg-[#487482]">
        <SignalPathSetup />
        <button type="button" className="flex w-[43px] shrink-0 flex-col items-center gap-2 pt-[6px] text-white">
          <Collapse flip />
          <span className="text-[18px] leading-none font-bold [writing-mode:vertical-rl]">Show Generator/Analyzer</span>
        </button>
        <main className="mr-[3px] min-w-0 flex-1">
          <h3 className="flex h-[33px] items-center pt-1 pl-[6px] text-[18px] font-bold text-white">Measurements</h3>
          <div className="flex h-[30px] items-center gap-4 bg-[#f0f0f0] text-[15px] font-bold text-[#34687a]">
            <button type="button" className="-mr-2 h-7 bg-[#7db7ea] px-[7px] text-[#6b6b78]">Monitors/Meters</button>
            {['Sweep', 'FFT', 'Recorder', 'Continuous Sweep', 'Acoustic Response'].map((t) => <button key={t} type="button">{t}</button>)}
          </div>
          <div className="flex h-8 items-center gap-2 bg-[#d3d3d3] pr-[7px] pl-1">
            <ToolButton name="route" />
            <ToolButton name="pulse" />
            <ToolButton name="wavePlus" />
            <span className="h-5 w-px bg-white"></span>
            <Toggle on />
            <span className="ml-auto"><Dock up /></span>
          </div>
          <div className="flex gap-[7px] border-t border-[#dae4e6] bg-[#a5a5a5] px-1 pt-[2px] pb-1">
            <GraphPanel title="Scope" x="s" y="V"><ScopeChart /></GraphPanel>
            <GraphPanel title="FFT" x="Hz" y="dBrA"><FftChart /></GraphPanel>
          </div>
          <Dots className="h-[9px]" />
          <div className="flex h-[30px] items-center bg-[#d3d3d3] pr-[7px] pl-[3px] text-[15px]">
            <button type="button" className="flex items-center gap-1"><Tile name="plus" />Add Meter</button>
            <Down className="mr-3 ml-[9px] w-[7px]" />
            <button type="button" className="flex items-center gap-1 border-l border-[#eee] pl-1"><Tile name="data" />Save Meter Data</button>
            <button type="button" className="ml-4 flex items-center gap-1 border-l border-[#eee] pl-1"><Tile name="play" />Regulate</button>
            <span className="ml-auto"><Dock /></span>
          </div>
          <div className="flex bg-[#a5a5a5]">
            <div className="grid min-w-0 flex-1 grid-cols-2 gap-[7px] pt-1 pr-[13px] pl-1">
              <Meter title="RMS Level" unit="Vrms" suffix="Vrms" gap="mr-[50px]" className="h-[196px]" rows={[{ value: '4.011', fill: 74, from: 0, to: 74 }, { value: '4.016', fill: 74, from: 0, to: 74 }]} />
              <Meter title="THD+N Ratio" unit="%" suffix="%" gap="mr-7" className="h-[196px]" rows={[{ value: '0.001988', fill: 22, from: 4, to: 100 }, { value: '0.002326', fill: 23, from: 4, to: 100 }]} />
              <Meter title="Frequency" unit="Hz" suffix="kHz" gap="mr-10" className="h-[183px]" rows={[{ value: '1.00000', fill: 5, from: 0, to: 81 }, { value: '1.00000', fill: 5, from: 0, to: 69 }]} />
              <Meter title="SINAD" unit="dB" suffix="dB" gap="mr-8" className="h-[183px]" rows={[{ value: '94.030', fill: 79, from: 0, to: 96 }, { value: '92.669', fill: 77, from: 0, to: 96 }]} />
            </div>
            <div className="flex w-5 flex-col items-center bg-[#f0f0f0] pt-[5px]">
              <ScrollArrow turn="rotate-0" />
              <div className="mt-1 h-[223px] w-[18px] bg-[#cbcbcb]"></div>
              <div className="mt-auto mb-1"><ScrollArrow turn="rotate-180" /></div>
            </div>
          </div>
        </main>
      </div>
      <StatusBar output={['ASIO: Quloos MUB ASIO Device 2 Chs', '192.000 kHz']} input={['Analog Balanced 2 Ch, 200 kohm', '5.000 Vrms', 'AC (<10 Hz) - 20 kHz']} />
    </div>
  );
}

function TreeIcon({ name, dark }) {
  if (name === 'folder') {
    return (
      <svg viewBox="0 0 14 12" className="w-[13px] shrink-0" aria-hidden="true">
        <path d="M1 11V1h4l1 1h6v2H4z" fill={dark ? '#6b8596' : '#8ea2ae'} />
        <path d="M1 11l3-7h10l-3 7z" fill={dark ? '#8fa5b3' : '#b4c3cc'} stroke="#708793" strokeWidth=".7" />
      </svg>
    );
  }
  if (name === 'ban') {
    return <svg viewBox="0 0 14 14" className="w-[13px] shrink-0" fill="none" stroke="#3f6279" strokeWidth="1.500" aria-hidden="true"><circle cx="7" cy="7" r="5.500" /><path d="M3 3l8 8" /></svg>;
  }
  if (name === 'dot') {
    return <svg viewBox="0 0 14 14" className="w-[13px] shrink-0" aria-hidden="true"><circle cx="7" cy="7" r="3.500" fill="#4b6b80" stroke="#24475a" /></svg>;
  }
  return <Tile name={name} size="size-[13px]" color={name === 'path' ? '#9fb4c0' : '#24475a'} />;
}

function TreeArrow({ dir, light }) {
  return (
    <svg viewBox="0 0 8 8" className="mr-[5px] w-[7px] shrink-0" fill={light ? '#fff' : '#111'} aria-hidden="true">
      {dir === 'right' && <path d="M1.500 1v6L7 4z" />}
      {dir === 'down' && <path d="M0 2h8L4 6.500z" />}
    </svg>
  );
}

function TreeRow({ item }) {
  let bg = 'bg-white';
  if (item.tint) bg = 'bg-[#e0ebf4]';
  if (item.leaf) bg = 'bg-[#b3c4ce]';
  if (item.selected) bg = 'bg-[#4a6b80] text-white';
  return (
    <li className={`flex min-h-0 flex-1 items-center whitespace-nowrap ${bg} ${item.pad}`}>
      {item.arrow && <span className="flex pl-[2px]"><TreeArrow dir={item.arrow} light={item.selected} /></span>}
      {item.check !== undefined && (
        <span className="relative mr-[3px] flex size-[11px] shrink-0">
          <input type="checkbox" aria-label={item.text} defaultChecked={item.check} className={`size-full appearance-none rounded-xs border ${item.selected ? 'border-white bg-white' : 'border-[#3f6279] bg-white checked:bg-[#3f6279]'}`} />
          {item.check && (
            <svg viewBox="0 0 11 11" className="pointer-events-none absolute inset-0" aria-hidden="true">
              <path d="M2.500 5.500l2.300 2.500 3.800-5.500" fill="none" stroke={item.selected ? '#3f6279' : '#fff'} strokeWidth="1.500" />
            </svg>
          )}
        </span>
      )}
      <TreeIcon name={item.icon} dark={item.selected} />
      <span className="ml-[3px]">{item.text}</span>
    </li>
  );
}

function MiniScope() {
  const rnd = makeRandom(99);
  const trace = (amp) => {
    let d = '';
    for (let i = 0; i <= 348; i += 1) {
      const y = 91.5 + (i % 2 ? 1 : -1) * (amp * (0.45 + rnd() * 0.55) + (rnd() < 0.06 ? 6 : 0));
      d += `${i ? 'L' : 'M'}${41 + i / 2} ${y.toFixed(1)}`;
    }
    return d;
  };
  return (
    <svg viewBox="0 0 238 199" className="block w-full bg-white" role="img" aria-label="Scope">
      <text x="128" y="10" textAnchor="middle" className="font-['Liberation_Mono',monospace] text-[9px]">Scope</text>
      {[1, 2, 3, 4, 5, 6, 7, 8, 9].map((i) => <path key={i} d={`M${41 + i * 17.400} 14V170`} stroke={i % 2 ? '#ececec' : '#ccc'} />)}
      {[-3, -2, -1, 0, 1, 2, 3].map((i) => <path key={i} d={`M41 ${91.500 + i * 24}H215`} stroke="#ccc" />)}
      {[-2, -1, 0, 1, 2, 3].map((i) => <path key={i} d={`M41 ${79.500 + i * 24}H215`} stroke="#eee" />)}
      <path d={trace(23)} fill="none" stroke="#3d5a9a" strokeWidth=".9" />
      <path d={trace(22)} fill="none" stroke="#b52b33" strokeWidth=".9" />
      <rect x="41" y="14" width="174" height="156" fill="none" stroke="#777" />
      {['30u', '20u', '10u', '0', '-10u', '-20u', '-30u'].map((t, i) => <text key={t} x="38" y={23 + i * 24} textAnchor="end" fontSize="10">{t}</text>)}
      {['0', '40m', '80m', '120m', '160m'].map((t, i) => <text key={t} x={41 + i * 34.800} y="183" textAnchor="middle" fontSize="10">{t}</text>)}
      <text x="128" y="194" textAnchor="middle" fontSize="10">Time (s)</text>
      <text transform="translate(11 92) rotate(-90)" textAnchor="middle" fontSize="9">Instantaneous Level (V)</text>
    </svg>
  );
}

function MiniFft() {
  const rnd = makeRandom(31);
  const trace = () => {
    let d = '';
    for (let i = 0; i <= 348; i += 1) {
      const t = i / 348;
      const y = 164 + t + (i % 2 ? -1 : 1) * rnd() * 5 - (1 - t) * 2;
      d += `${i ? 'L' : 'M'}${41 + i / 2} ${Math.min(170, y).toFixed(1)}`;
    }
    return d;
  };
  const gx = (hz) => 41 + (Math.log10(hz / 20) / 3) * 174;
  return (
    <svg viewBox="0 0 238 199" className="block w-full bg-white" role="img" aria-label="FFT">
      <text x="128" y="10" textAnchor="middle" className="font-['Liberation_Mono',monospace] text-[9px]">FFT</text>
      {[30, 50, 70, 200, 300, 500, 700, 2000, 3000, 5000, 7000].map((hz) => <path key={hz} d={`M${gx(hz)} 14V170`} stroke="#e6e6e6" />)}
      {[100, 1000, 10000].map((hz) => <path key={hz} d={`M${gx(hz)} 14V170`} stroke="#c4c4c4" />)}
      {[1, 2, 3, 4].map((i) => <path key={i} d={`M41 ${14 + i * 31.200}H215`} stroke="#ccc" />)}
      <path d={trace()} fill="none" stroke="#3d5a9a" strokeWidth=".9" />
      <path d={trace()} fill="none" stroke="#b52b33" strokeWidth=".9" />
      <rect x="41" y="14" width="174" height="156" fill="none" stroke="#777" />
      {['+40', '0', '-40', '-80', '-120', '-160'].map((t, i) => <text key={t} x="38" y={18 + i * 31.200} textAnchor="end" fontSize="10">{t}</text>)}
      {[[100, '100'], [1000, '1k'], [10000, '10k']].map(([hz, t]) => <text key={t} x={gx(hz)} y="183" textAnchor="middle" fontSize="10">{t}</text>)}
      <text x="128" y="194" textAnchor="middle" fontSize="10">Frequency (Hz)</text>
      <text transform="translate(11 92) rotate(-90)" textAnchor="middle" fontSize="9">Level (dBrA)</text>
    </svg>
  );
}

const ICON_S = 'size-[14px]';

function Navigator({ kind, id }) {
  return (
    <aside className="flex w-[238px] shrink-0 flex-col">
      <div className="flex h-6 items-center justify-between bg-[#4a6b80] pr-[7px] pl-1 text-[14px] font-bold text-white">
        <h3>Navigator</h3>
        <Collapse className="h-3" />
      </div>
      <div className="h-[43px] bg-[#dae2e6]">
        <div className="flex h-[23px] items-center pl-[3px] text-[10px]">
          <label htmlFor={`${id}-sequence`} className="w-[56px]">Sequence:</label>
          <Pick id={`${id}-sequence`} value="Sequence 1" arrow="down" text="text-[11px]" className="mr-1 h-full w-[83px] bg-white pr-[3px] pl-1" />
          <ToolButton name="gear" size={ICON_S} label="Sequence settings" />
          <span className="ml-[6px] flex"><ToolButton name="lock" size={ICON_S} /></span>
          <button type="button" aria-label="Help" className="mr-1 ml-auto grid size-3 place-items-center rounded-xs bg-[#2c4a80] text-[9px] font-bold text-white">?</button>
          <Down className="mr-1 w-[5px]" />
        </div>
        <div className="flex h-5 items-center gap-[6px] pl-[2px]">
          <button type="button" aria-label="Run sequence" className="grid h-[15px] w-[44px] place-items-center rounded-xs border border-[#4f7894] bg-[#b4dcf2]">
            <svg viewBox="0 0 8 8" className="w-[7px]"><path d="M0 0v8l8-4z" fill="#1f3f52" /></svg>
          </button>
          <span className="h-4 w-px bg-white"></span>
          <ToolButton name="addPath" size={ICON_S} />
          <ToolButton name="addBars" size={ICON_S} />
          <ToolButton name="cross" size={ICON_S} />
          <span className="h-4 w-px bg-white"></span>
          <ToolButton name="copy" size={ICON_S} />
          <ToolButton name="addDoc" size={ICON_S} color="#9aa3a8" />
        </div>
      </div>
      <div className="h-[492px] bg-white">
        <ul className={`flex flex-col text-[10px] leading-none ${kind === 'dr' ? 'h-[438px]' : 'h-[391px]'}`}>
          {navItems(kind).map((item, i) => <TreeRow key={i} item={item} />)}
        </ul>
      </div>
      {kind === 'dr' ? (
        <div className="flex h-[14px] items-center bg-[#f0f0f0] px-1">
          <svg viewBox="0 0 6 8" className="w-[5px]"><path d="M5 1L1.500 4 5 7" fill="none" stroke="#333" strokeWidth="1.500" /></svg>
          <div className="mx-[6px] h-[13px] flex-1 bg-[#cbcbcb]"></div>
          <svg viewBox="0 0 6 8" className="ml-1 w-[5px]"><path d="M1 1l3.500 3L1 7" fill="none" stroke="#333" strokeWidth="1.500" /></svg>
        </div>
      ) : (
        <div className="h-[14px] bg-white"></div>
      )}
      <div className="h-[30px] bg-[#4a6b80] text-white">
        <Dots className="h-[6px]" />
        <div className="flex h-[22px] items-center justify-between pr-[6px] pl-1 text-[13px] font-bold">
          <h3>Monitors/Meters</h3>
          <PopOut className="size-[10px] text-white" />
        </div>
      </div>
      <div className="flex h-5 items-center gap-[6px] bg-[#dae2e6] pl-[3px]">
        {['sine', 'spectrum', 'list', 'route', 'pulse', 'wavePlus'].map((n) => (
          <span key={n} className={`flex ${(kind === 'dr' ? 'sine' : 'spectrum') === n ? 'ring-2 ring-[#7db7ea]' : ''}`}><ToolButton name={n} size={ICON_S} /></span>
        ))}
        <span className="h-4 w-px bg-white"></span>
        <Toggle on small />
      </div>
      {kind === 'dr' ? <MiniScope /> : <MiniFft />}
    </aside>
  );
}

function Spinner() {
  return (
    <svg viewBox="0 0 15 20" className="ml-px w-[15px] shrink-0" aria-hidden="true">
      <rect x=".5" y=".5" width="14" height="9" rx="2" fill="#6f9aa8" stroke="#4f7e90" />
      <rect x=".5" y="10.500" width="14" height="9" rx="2" fill="#6f9aa8" stroke="#4f7e90" />
      <path d="M3 7.500l4.500-5 4.500 5zM3 12.500h9l-4.500 5z" fill="#fff" />
    </svg>
  );
}

function SmallField({ label, id, className, labelWidth, children }) {
  return (
    <div className={`flex h-5 items-center ${className}`}>
      <label htmlFor={id} className={`shrink-0 text-right ${labelWidth}`}>{label}</label>
      <div className="ml-2 flex items-center">{children}</div>
    </div>
  );
}

const SMALL_SELECT = 'h-5 border border-[#aaa] bg-[#e2e2e2] px-1';
const SMALL_INPUT = 'h-5 border border-[#777] bg-white px-[3px]';

function MeasurementSettings({ kind, id }) {
  const dr = kind === 'dr';
  const labelWidth = dr ? 'w-[105px]' : 'w-[100px]';
  return (
    <section className={`shrink-0 bg-[#b3c4ce] text-[10px] ${dr ? 'w-[339px]' : 'w-[331px]'}`}>
      <button type="button" className="mt-[5px] ml-[6px] flex h-[25px] w-[122px] items-center justify-center gap-[6px] rounded-xs border-2 border-[#4f7e9c] bg-[#a9d4ec] text-[12px] leading-none font-bold text-[#24475a]">
        <svg viewBox="0 0 10 12" className="w-[9px]"><path d="M0 0v12l10-6z" fill="#24475a" /></svg>
        Start
      </button>
      <Rule className="mt-1 mr-[3px] ml-[2px]" />
      <h4 className="mt-[3px] ml-[5px] text-[11px] leading-[14px] font-bold">• Generator</h4>
      <SmallField label="Waveform:" id={`${id}-wave`} labelWidth={labelWidth} className="mt-[3px]">
        <Pick id={`${id}-wave`} value="Sine" text="text-[10px]" className={`${SMALL_SELECT} w-[86px]`} />
      </SmallField>
      <div className="mt-[12px] mr-[6px] ml-[6px] h-[66px] border border-[#9aa5ab] pt-2">
        <div className={`flex h-[14px] items-center gap-1 ${dr ? 'ml-[106px]' : 'ml-[101px]'}`}>
          <Check id={`${id}-track`} checked small /><label htmlFor={`${id}-track`}>Levels Track Ch1</label>
        </div>
        <div className={`flex h-[18px] items-center ${dr ? 'ml-[108px]' : 'ml-[103px]'}`}><span className="w-[119px]">Level</span><span>DC Offset</span></div>
        <SmallField label="Ch1:" id={`${id}-level`} labelWidth={dr ? 'w-[98px]' : 'w-[93px]'}>
          <Pick id={`${id}-level`} value="-0.000 dBFS" text="text-[10px]" className={`${SMALL_INPUT} w-[99px]`} />
          <Spinner />
          <Pick label="DC Offset" value="0.000 D" text="text-[10px]" className={`${SMALL_INPUT} ml-1 w-[77px]`} />
          <Spinner />
        </SmallField>
      </div>
      {dr && (
        <SmallField label="Level Ratio:" id={`${id}-ratio`} labelWidth={labelWidth} className="mt-[2px]">
          <input id={`${id}-ratio`} defaultValue="-60.000 dB" className={`${SMALL_INPUT} w-[117px]`} />
        </SmallField>
      )}
      <SmallField label="Frequency:" id={`${id}-freq`} labelWidth={labelWidth} className={dr ? 'mt-[5px]' : 'mt-px'}>
        <Pick id={`${id}-freq`} value="1.00000 kHz" text="text-[10px]" className={`${SMALL_INPUT} w-[99px]`} />
        <Spinner />
      </SmallField>
      <p className={`ml-[6px] leading-[14px] ${dr ? 'mt-[11px]' : 'mt-[10px]'}`}>Channels:</p>
      <div className="mt-[7px] ml-[4px] flex text-[8px] font-bold text-white">
        {[1, 2].map((n) => <button key={n} type="button" className="h-[14px] w-[13px] rounded-xs border border-[#3f7180] bg-[#5f8f9c] leading-none">{n}</button>)}
      </div>
      <Rule className="mt-1 mr-[3px] ml-[2px]" />
      <h4 className="mt-[3px] ml-[5px] text-[11px] leading-[14px] font-bold">• Analyzer</h4>
      <SmallField label="High-pass Filter:" id={`${id}-hp`} labelWidth={labelWidth} className="mt-[3px]">
        <Pick id={`${id}-hp`} value="Elliptic" text="text-[10px]" className={`${SMALL_SELECT} w-[106px]`} />
        <input aria-label="High-pass frequency" defaultValue="20 Hz" className={`${SMALL_INPUT} ml-[5px] w-[71px]`} />
      </SmallField>
      <SmallField label="Low-pass Filter:" id={`${id}-lp`} labelWidth={labelWidth} className="mt-1">
        <Pick id={`${id}-lp`} value="Elliptic" text="text-[10px]" className={`${SMALL_SELECT} w-[106px]`} />
        <input aria-label="Low-pass frequency" defaultValue="20 kHz" className={`${SMALL_INPUT} ml-[5px] w-[71px]`} />
      </SmallField>
      <SmallField label="Weighting:" id={`${id}-weight`} labelWidth={labelWidth} className="mt-1">
        <Pick id={`${id}-weight`} value="A-wt." text="text-[10px]" className={`${SMALL_SELECT} w-[106px]`} />
      </SmallField>
      <Rule className="mt-[9px] mr-[3px] ml-[2px]" />
      <button type="button" className="mt-[3px] ml-[5px] block h-5 w-[108px] border border-[#aaa] bg-[#e2e2e2]">Advanced Settings...</button>
    </section>
  );
}

function ApMark({ x, y }) {
  return (
    <g transform={`translate(${x} ${y})`} fill="none" stroke="#1b6ca8">
      <path d="M8 2q11-4 12 5t-12 9" strokeWidth="1.500" />
      <text x="0" y="12" fontSize="12" fontStyle="italic" fontWeight="700" fill="#1b6ca8" stroke="none">Ap</text>
    </g>
  );
}

// horizontal bar graph; the plot keeps its place from the left edge of the panel
function BarChart({ title, axis, stamp, width, right, rows }) {
  const left = 84;
  const px = (v) => left + (v / 140) * (right - left);
  const colors = [['#4a629a', '#2d4688'], ['#d05552', '#b5302f']];
  return (
    <svg viewBox={`0 0 ${width} 689`} className="block w-full bg-white" role="img" aria-label={title}>
      <text x={(left + right) / 2} y="9" textAnchor="middle" className="font-['Liberation_Mono',monospace] text-[9px]">{title}</text>
      <text x={right - 2} y="24" textAnchor="end" fontSize="11">{stamp}</text>
      {Array.from({ length: 13 }, (_, i) => <path key={i} d={`M${px((i + 1) * 10)} 28V628`} stroke={i % 2 ? '#d0d0d0' : '#ececec'} />)}
      <path d={`M${left} 208H${right}M${left} 448H${right}`} stroke="#d0d0d0" />
      <rect x={left} y="28" width={right - left} height="600" fill="none" stroke="#777" />
      <ApMark x={right - 29} y={36} />
      {rows.map((r, i) => (
        <g key={r.ch}>
          <rect x={left} y={133 + i * 240} width={px(r.value) - left} height="150" fill={colors[i][0]} stroke={colors[i][1]} />
          {[10, 20, 30, 40, 50, 60, 70, 80, 90, 100, 110].map((v) => <path key={v} d={`M${px(v)} ${133 + i * 240}v150`} stroke={colors[i][1]} opacity={v % 20 ? 0.1 : 0.25} />)}
          <path d={`M${left} ${208 + i * 240}H${px(r.value)}`} stroke={colors[i][1]} opacity=".3" />
          <text x={left - 9} y={219 + i * 240} textAnchor="end" fontSize="32">{r.ch}</text>
          <rect x={right + 4} y={201 + i * 240} width="13" height="13" fill={colors[i][0]} />
          <text x={width - 9} y={219 + i * 240} textAnchor="end" fontSize="32" xmlSpace="preserve">{r.text}</text>
        </g>
      ))}
      {[0, 20, 40, 60, 80, 100, 120, 140].map((v) => <text key={v} x={px(v)} y="665" textAnchor="middle" fontSize="31">{v}</text>)}
      <text x={(left + right) / 2} y="684" textAnchor="middle" fontSize="11">{axis}</text>
    </svg>
  );
}

function Thumbnail({ label }) {
  return (
    <figure className="mt-1 ml-1 w-[104px]">
      <svg viewBox="0 0 76 46" className="mx-auto block w-[76px] border border-[#4a6b80] bg-[#dfe9f0]" aria-hidden="true">
        <rect x="4" y="3" width="68" height="41" fill="#fff" stroke="#4a6b80" />
        <path d="M10 10h39v9H10z" fill="#4a629a" />
        <path d="M10 25h40v9H10z" fill="#d05552" />
        <path d="M58 5v36" stroke="#ccc" strokeWidth=".7" />
        <path d="M6 14.500h3M6 29.500h3M60 14.500h10M60 29.500h10M10 41h50" stroke="#777" strokeDasharray="2 2" />
      </svg>
      <figcaption className="h-[15px] bg-[#4a6b80] text-center text-[10px] leading-[14px] whitespace-nowrap text-white">{label}</figcaption>
    </figure>
  );
}

function SequenceWindow({ id, kind, title, chartTitle, axis, stamp, width, right, rows, thumb }) {
  return (
    <div className="mx-[6px]">
      <div className="flex h-[20px] items-center justify-between pl-[2px]">
        <div className="flex items-center gap-[6px] text-[11px] text-[#8c8c8c]">
          <AppIcon className="size-3" />
          模拟测试XLR.approjx - APx500 v5.0.3
        </div>
        <CaptionButtons small />
      </div>
      <div className="flex h-[44px] items-end justify-between bg-[#6f92aa] pr-1 text-white">
        <div className="self-start text-[11px] font-bold">
          <nav className="flex h-[23px] items-center gap-[17px] pl-[14px]">
            {['File', 'View', 'Measurements', 'Project', 'Window', 'Help'].map((t) => (
              <button key={t} type="button"><span className="underline">{t[0]}</span>{t.slice(1)}</button>
            ))}
          </nav>
          <div className="flex h-5 items-center gap-[6px] pl-[2px]">
            <ToolButton name="doc" size={ICON_S} />
            <Down className="w-[5px] text-black" />
            <ToolButton name="open" size={ICON_S} />
            <ToolButton name="save" size={ICON_S} />
            <ToolButton name="gear" size={ICON_S} />
            <span className="h-[14px] w-px bg-white"></span>
            {['sine', 'spectrum', 'list', 'route', 'pulse', 'wavePlus'].map((n) => <ToolButton key={n} name={n} size={ICON_S} />)}
            <span className="h-[14px] w-px bg-white"></span>
            <div className="mr-1 flex items-center gap-[2px]"><Speaker className="w-3" />Audible Monitor</div>
            <Toggle small />
          </div>
        </div>
        <button type="button" className="mb-[2px] flex h-[20px] w-[132px] items-center rounded-xs border border-white bg-[#3c5a6c] pr-[3px] text-[11px] leading-none font-bold">
          <span className="flex-1">Sequence Mode</span>
          <Down tall className="w-[7px] text-white" />
        </button>
      </div>
      <div className="flex">
        <Navigator kind={kind} id={id} />
        <div className="flex w-[6px] shrink-0 flex-col items-center justify-center gap-1 bg-[#4a6b80]">
          {[0, 1, 2].map((i) => <span key={i} className="size-[2px] bg-[#b9cbd3]"></span>)}
        </div>
        <div className="flex min-w-0 flex-1 flex-col">
          <h3 className="flex h-[21px] items-center gap-[11px] bg-[#4a6b80] pl-[6px] text-[13px] font-bold text-white">
            <svg viewBox="0 0 8 12" className="w-[7px]" aria-hidden="true"><path d="M6.500 1L1.500 6l5 5" fill="none" stroke="#fff" strokeWidth="1.800" /></svg>
            {title}
          </h3>
          <div className="flex flex-1">
            <MeasurementSettings kind={kind} id={id} />
            <section className="flex min-w-0 flex-1 flex-col bg-white">
              <div className="flex h-[22px] items-center gap-[6px] bg-[#dae2e6] pl-[3px] text-[11px]">
                <ToolButton name="save" size={ICON_S} />
                <ToolButton name="copy" size={ICON_S} />
                <ToolButton name="print" size={ICON_S} />
                <span className="mr-px h-[14px] w-px bg-white"></span>
                <ToolButton name="zoom" size={ICON_S} />
                <ToolButton name="move" size={ICON_S} />
                <ToolButton name="expand" size={ICON_S} />
                <span className="h-[14px] w-px bg-white"></span>
                <ToolButton name="table" size={ICON_S} />
                <span className="flex items-center gap-[2px]"><ToolButton name="trace" size={ICON_S} /><Down className="w-[5px]" /></span>
                <span className="flex items-center gap-[2px]"><ToolButton name="func" size={ICON_S} /><Down className="w-[5px]" /></span>
                <ToolButton name="gear" size={ICON_S} />
                <span className="h-[14px] w-px bg-white"></span>
                <label htmlFor={`${id}-unit`}>Unit</label>
                <Pick id={`${id}-unit`} value="dB" arrow="down" text="text-[11px]" className="h-full w-[39px] bg-white pr-[3px] pl-1" />
                <span className="mr-[5px] ml-auto"><PopOut className="size-[10px] text-[#1d3f85]" /></span>
              </div>
              <BarChart title={chartTitle} axis={axis} stamp={stamp} width={width} right={right} rows={rows} />
              <div className="flex h-[22px] items-center gap-[5px] bg-[#dae2e6] pl-[3px] text-[11px]">
                <ToolButton name="first" size={ICON_S} color="#a5a5a5" />
                <ToolButton name="last" size={ICON_S} color="#a5a5a5" />
                <span className="h-[14px] w-px bg-white"></span>
                <button type="button" className="flex items-center gap-[2px]"><Tile name="plus" size={ICON_S} />Add</button>
                <Down className="w-[5px]" />
                <button type="button" className="flex items-center gap-[2px]"><Tile name="cross" size={ICON_S} />Delete</button>
                <Down className="w-[5px]" />
                <button type="button" className="flex items-center gap-[2px]"><Tile name="gear" size={ICON_S} />Details</button>
                <span className="mr-[5px] ml-auto"><Dock className="w-[11px]" /></span>
              </div>
              <Thumbnail label={thumb} />
            </section>
          </div>
        </div>
      </div>
      <StatusBar small output={['ASIO: Quloos MUB ASIO Device 2 Chs', '192.000 kHz']} input={['Analog Unbalanced 2 Ch, 100 kohm', '310.0 mVrms', '20 Hz - 20 kHz']} />
    </div>
  );
}

function Card({ title, className, children }) {
  return (
    <section className="mr-[52px] ml-[55px] border-[5px] border-[#4b6b80] bg-white pb-2">
      <h2 className={`flex items-center justify-center text-[70px] leading-none font-bold text-[#4b6b80] ${className}`}>{title}</h2>
      {children}
    </section>
  );
}

export default function App() {
  return (
    <div className="overflow-hidden bg-[#eeeeee] pb-[26px] font-['Open_Sans','Noto_Sans_CJK_SC',sans-serif] text-black">
      <header className="flex h-[287px] items-start justify-between pt-[126px] pr-[146px] pl-[153px]">
        <h1 className="text-[94px] leading-none font-bold text-[#6b6b6b]">实测指标</h1>
        <div className="mt-2 grid grid-cols-2 gap-x-4 gap-y-[13px]">
          <span className="h-[33px] w-8 bg-[#464040]"></span>
          <span className="h-[33px] w-8 bg-[#747474]"></span>
          <span className="h-[33px] w-8 bg-[#b5b5b7]"></span>
          <span className="h-[33px] w-8 bg-[#dcdddd]"></span>
        </div>
      </header>
      <Card title="信纳比" className="h-[215px] pt-8">
        <BenchWindow />
      </Card>
      <div className="h-[50px]"></div>
      <Card title="动态范围" className="h-[219px] pt-[60px]">
        <SequenceWindow
          id="dr"
          kind="dr"
          title="Dynamic Range - AES17"
          chartTitle="Dynamic Range - AES17"
          axis="Dynamic Range - AES17 (dB)"
          stamp="2025/9/5 10:13:27.891"
          width={1088}
          right={860}
          thumb="Dynamic Range -..."
          rows={[{ ch: 'Ch1', value: 113.372, text: '113.372  dB' }, { ch: 'Ch2', value: 115.527, text: '115.527  dB' }]}
        />
      </Card>
      <div className="h-[45px]"></div>
      <Card title="信噪比" className="h-[219px] pt-[60px]">
        <SequenceWindow
          id="snr"
          kind="snr"
          title="Signal to Noise Ratio"
          chartTitle="Signal to Noise Ratio"
          axis="Signal to Noise Ratio (dB)"
          stamp="2025/9/5 10:32:37.874"
          width={1096}
          right={868}
          thumb="Signal to Noise Ratio"
          rows={[{ ch: 'Ch1', value: 118.406, text: '118.406  dB' }, { ch: 'Ch2', value: 118.255, text: '118.255  dB' }]}
        />
      </Card>
    </div>
  );
}
